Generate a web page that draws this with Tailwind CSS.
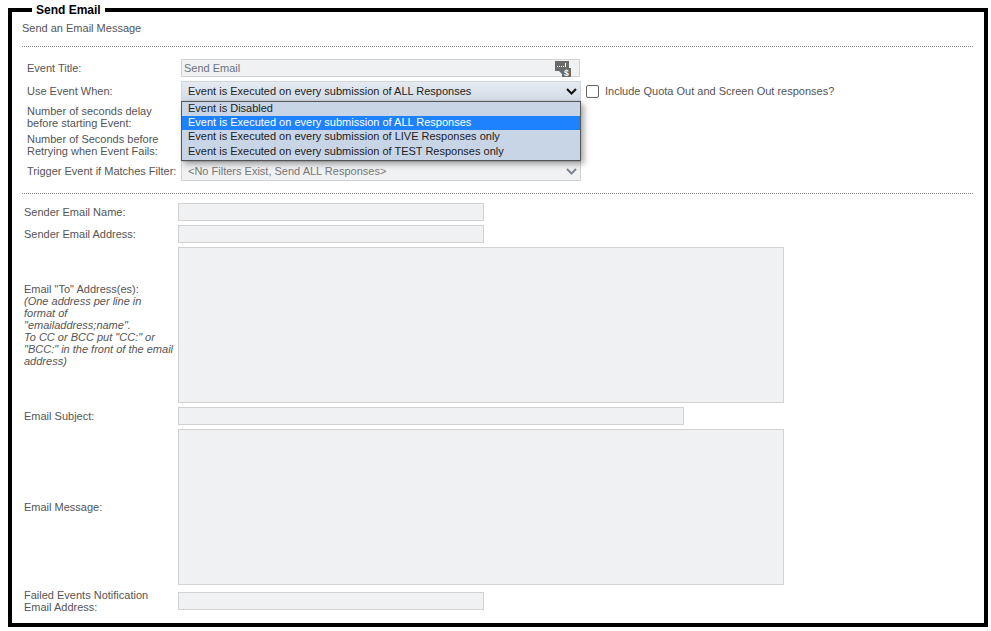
<!DOCTYPE html>
<html lang="en">
<head>
<meta charset="UTF-8">
<title>Send Email</title>
<script src="https://cdn.jsdelivr.net/npm/@tailwindcss/browser@4"></script>
</head>
<body class="bg-white font-['Liberation_Sans',Arial,sans-serif] text-[11px] text-[#555]">
<div class="relative mt-2 ml-2 w-[980px] h-[619px] border-4 border-black px-2.5 pt-2">
  <div class="absolute -top-[9px] left-5 bg-white px-1 text-[12px] leading-[14px] font-bold text-black">Send Email</div>

  <p class="h-5 leading-[14px] pt-[1px] text-[#555]">Send an Email Message</p>
  <div class="mt-1.5 mr-px border-t border-dotted border-[#888]"></div>

  <div class="relative mt-3 pl-[5px]">
    <div class="flex h-[18px] items-center">
      <label class="w-[154px] shrink-0">Event Title:</label>
      <div class="flex w-[399px] h-[18px] items-center justify-between border border-[#d2d2d2] bg-[#eff1f2] pl-0.5 pr-2 text-[#6b7480]">
        <span>Send Email</span>
        <svg width="16" height="17" viewBox="0 0 16 17"><path d="M0 1h14v10H7v3l-3-3H0z" fill="#6a6a6a"/><path d="M2 6h1v1H2zM4 6h1v1H4zM6 6h1v1H6zM8 6h1v1H8zM10 3h1v4h-1z" fill="#fff"/><rect x="7" y="8" width="9" height="9" fill="#6a6a6a"/><text x="9" y="16" font-size="8.500" font-weight="700" fill="#fff">$</text></svg>
      </div>
    </div>
    <div class="mt-1 flex h-5 items-center">
      <label class="w-[154px] shrink-0">Use Event When:</label>
      <div class="flex w-[400px] h-5 items-center justify-between border border-[#cfd6de] bg-gradient-to-b from-[#e6ebf1] to-[#d3dce8] pl-1.5 pr-[3px] text-[#222]">
        <span>Event is Executed on every submission of ALL Responses</span>
        <svg width="11" height="7" viewBox="0 0 11 7"><path d="M1 1l4.500 4.500L10 1" fill="none" stroke="#111" stroke-width="2"/></svg>
      </div>
      <span class="ml-[5px] h-[13px] w-[13px] rounded-[2px] border border-[#666] bg-white"></span>
      <span class="ml-1.5">Include Quota Out and Screen Out responses?</span>
    </div>

    <div class="absolute left-[159px] top-[42px] z-10 w-[400px] h-[60px] border border-[#555] bg-[#c8d5e6] text-[#222] shadow-[3px_3px_6px_rgba(0,0,0,0.35)]">
      <div class="h-[14px] pl-1.5 leading-[13px]">Event is Disabled</div>
      <div class="h-[14px] pl-1.5 leading-[13px] bg-[#1e82ff] text-white">Event is Executed on every submission of ALL Responses</div>
      <div class="h-[14px] pl-1.5 leading-[13px]">Event is Executed on every submission of LIVE Responses only</div>
      <div class="h-[15px] pl-1.5 leading-[15px]">Event is Executed on every submission of TEST Responses only</div>
    </div>

    <div class="mt-1 h-6 w-[154px] leading-3">Number of seconds delay<br>before starting Event:</div>
    <div class="mt-1 h-6 w-[154px] leading-3">Number of Seconds before<br>Retrying when Event Fails:</div>
    <div class="mt-1 flex h-5 items-center">
      <label class="w-[154px] shrink-0">Trigger Event if Matches Filter:</label>
      <div class="flex w-[400px] h-5 items-center justify-between border border-[#d2d2d2] bg-[#eff1f2] pl-1.5 pr-[3px] text-[#777]">
        <span>&lt;No Filters Exist, Send ALL Responses&gt;</span>
        <svg width="11" height="7" viewBox="0 0 11 7"><path d="M1 1l4.500 4.500L10 1" fill="none" stroke="#7d8790" stroke-width="2"/></svg>
      </div>
    </div>
  </div>

  <div class="mt-3 mr-px border-t border-dotted border-[#888]"></div>

  <div class="mt-[9px] grid grid-cols-[154px_1fr] gap-y-1 pl-0.5 items-center">
    <label>Sender Email Name:</label>
    <div class="h-[18px] w-[306px] border border-[#d2d2d2] bg-[#eff1f2]"></div>
    <label>Sender Email Address:</label>
    <div class="h-[18px] w-[306px] border border-[#d2d2d2] bg-[#eff1f2]"></div>
    <div class="leading-3 pr-1">Email "To" Address(es):<br><i>(One address per line in format of "emailaddress;name".<br>To CC or BCC put "CC:" or "BCC:" in the front of the email address)</i></div>
    <div class="h-[156px] w-[606px] border border-[#d2d2d2] bg-[#eff1f2]"></div>
    <label>Email Subject:</label>
    <div class="h-[18px] w-[506px] border border-[#d2d2d2] bg-[#eff1f2]"></div>
    <label>Email Message:</label>
    <div class="h-[156px] w-[606px] border border-[#d2d2d2] bg-[#eff1f2]"></div>
    <label class="leading-3">Failed Events Notification<br>Email Address:</label>
    <div class="h-[18px] w-[306px] border border-[#d2d2d2] bg-[#eff1f2]"></div>
  </div>
</div>
</body>
</html>
